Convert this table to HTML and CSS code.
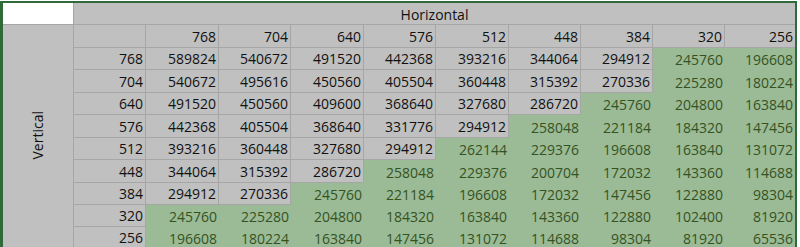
FILE: index.html
```html
<!DOCTYPE html>
<html>
<head>
<meta charset="utf-8">
<link rel="stylesheet" href="styles.css">
</head>
<body>
<div class="sheet">
  <div class="corner"></div>
  <div class="hhead">Horizontal</div>
  <div class="vhead"><span class="vtext">Vertical</span></div>

  <div class="c"></div>
  <div class="c">768</div><div class="c">704</div><div class="c">640</div><div class="c">576</div><div class="c">512</div><div class="c">448</div><div class="c">384</div><div class="c">320</div><div class="c last">256</div>

  <div class="c">768</div>
  <div class="c">589824</div><div class="c">540672</div><div class="c">491520</div><div class="c">442368</div><div class="c">393216</div><div class="c">344064</div><div class="c">294912</div><div class="g">245760</div><div class="g last">196608</div>

  <div class="c">704</div>
  <div class="c">540672</div><div class="c">495616</div><div class="c">450560</div><div class="c">405504</div><div class="c">360448</div><div class="c">315392</div><div class="c">270336</div><div class="g">225280</div><div class="g last">180224</div>

  <div class="c">640</div>
  <div class="c">491520</div><div class="c">450560</div><div class="c">409600</div><div class="c">368640</div><div class="c">327680</div><div class="c">286720</div><div class="g">245760</div><div class="g">204800</div><div class="g last">163840</div>

  <div class="c">576</div>
  <div class="c">442368</div><div class="c">405504</div><div class="c">368640</div><div class="c">331776</div><div class="c">294912</div><div class="g">258048</div><div class="g">221184</div><div class="g">184320</div><div class="g last">147456</div>

  <div class="c">512</div>
  <div class="c">393216</div><div class="c">360448</div><div class="c">327680</div><div class="c">294912</div><div class="g">262144</div><div class="g">229376</div><div class="g">196608</div><div class="g">163840</div><div class="g last">131072</div>

  <div class="c">448</div>
  <div class="c">344064</div><div class="c">315392</div><div class="c">286720</div><div class="g">258048</div><div class="g">229376</div><div class="g">200704</div><div class="g">172032</div><div class="g">143360</div><div class="g last">114688</div>

  <div class="c">384</div>
  <div class="c">294912</div><div class="c">270336</div><div class="g">245760</div><div class="g">221184</div><div class="g">196608</div><div class="g">172032</div><div class="g">147456</div><div class="g">122880</div><div class="g last">98304</div>

  <div class="c">320</div>
  <div class="g">245760</div><div class="g">225280</div><div class="g">204800</div><div class="g">184320</div><div class="g">163840</div><div class="g">143360</div><div class="g">122880</div><div class="g">102400</div><div class="g last">81920</div>

  <div class="c">256</div>
  <div class="g">196608</div><div class="g">180224</div><div class="g">163840</div><div class="g">147456</div><div class="g">131072</div><div class="g">114688</div><div class="g">98304</div><div class="g">81920</div><div class="g last">65536</div>
</div>
</body>
</html>
```

FILE: styles.css
```css
html, body {
  margin: 0;
  padding: 0;
  background: #ffffff;
  overflow: hidden;
}

body {
  padding-top: 1px;
  font-family: "Open Sans", "Liberation Sans", sans-serif;
  font-size: 14px;
  font-weight: 500;
  color: #111111;
}

.sheet {
  width: 792px;
  display: grid;
  grid-template-columns: 71px 72px 73px 72px 73px 72px 73px 72px 72px 72px 70px;
  grid-template-rows: 22px 23px 22px 23px 22px 23px 22px 23px 22px 22px 22px;
  border-top: 2px solid #2f6b3a;
  border-left: 3px solid #2f6b3a;
  border-right: 2px solid #2f6b3a;
}

.sheet > div {
  box-sizing: border-box;
  display: flex;
  align-items: flex-end;
  justify-content: flex-end;
  line-height: 16px;
  padding: 0 2px 2px 0;
  white-space: nowrap;
}

.corner {
  grid-column: 1;
  grid-row: 1;
  background: #ffffff;
  border-right: 1px solid #a6a6a6;
  border-bottom: 1px solid #a6a6a6;
}

.hhead {
  grid-column: 2 / 12;
  grid-row: 1;
  background: #c0c0c0;
  border-bottom: 1px solid #a6a6a6;
  justify-content: center !important;
  padding: 0 0 1px 0 !important;
}

.vhead {
  grid-column: 1;
  grid-row: 2 / 12;
  background: #c0c0c0;
  border-right: 1px solid #a6a6a6;
  align-items: flex-start !important;
  justify-content: center !important;
  padding: 86px 0 0 0 !important;
}

.vtext {
  writing-mode: vertical-rl;
  transform: rotate(180deg);
}

.c {
  background: #c0c0c0;
  border-right: 1px solid #a6a6a6;
  border-bottom: 1px solid #a6a6a6;
}

.g {
  background: #9bba96;
  color: #35531f;
}

.last {
  border-right: none !important;
}
```
